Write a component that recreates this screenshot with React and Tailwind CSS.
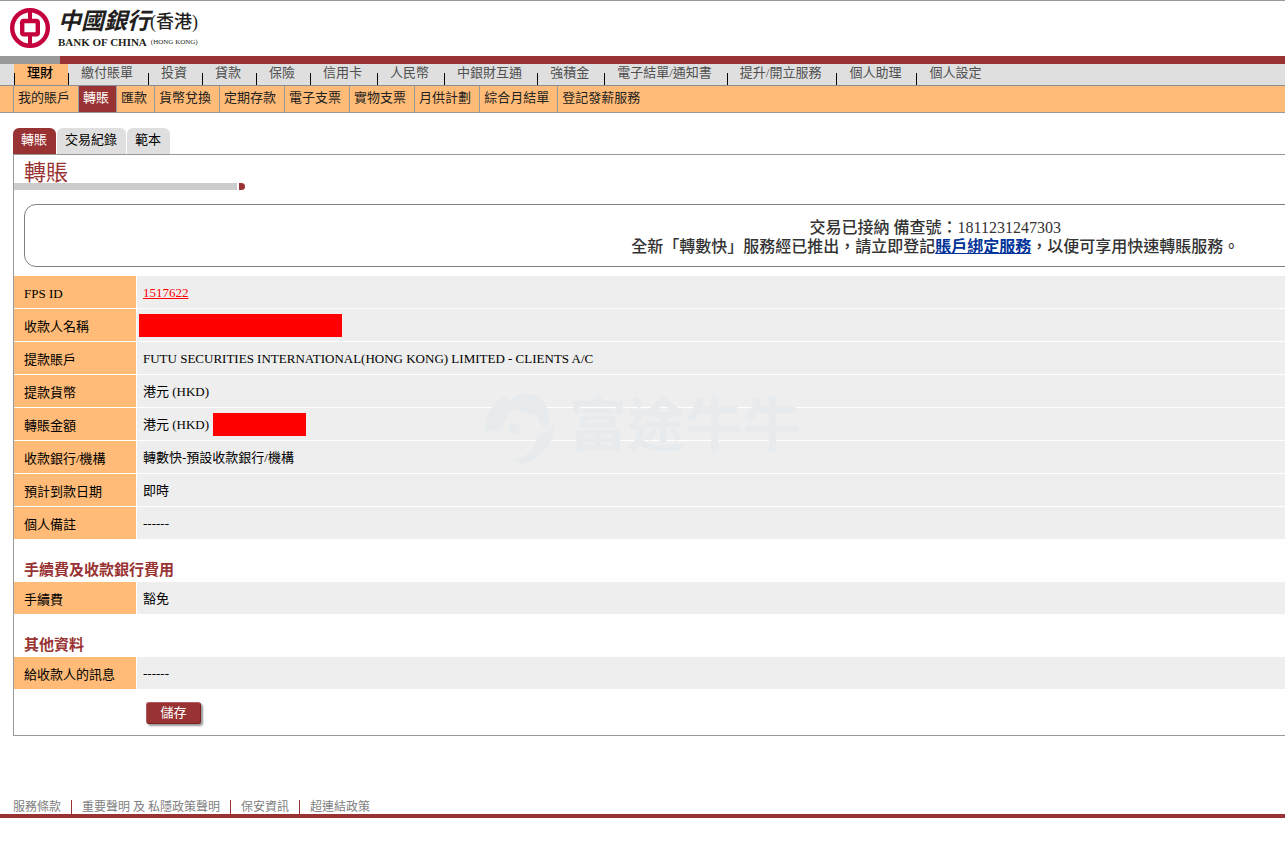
const mainNav = ['理財', '繳付賬單', '投資', '貸款', '保險', '信用卡', '人民幣', '中銀財互通', '強積金', '電子結單/通知書', '提升/開立服務', '個人助理', '個人設定']
const subNav = ['我的賬戶', '轉賬', '匯款', '貨幣兌換', '定期存款', '電子支票', '實物支票', '月供計劃', '綜合月結單', '登記發薪服務']
const tabs = ['轉賬', '交易紀錄', '範本']
const footerLinks = ['服務條款', '重要聲明 及 私隱政策聲明', '保安資訊', '超連結政策']

const details = [
  { label: 'FPS ID', value: <a href="#" className="text-[#ff0000] underline">1517622</a> },
  { label: '收款人名稱', value: <Masked className="-ml-1 w-[203px]" /> },
  { label: '提款賬戶', value: 'FUTU SECURITIES INTERNATIONAL(HONG KONG) LIMITED - CLIENTS A/C' },
  { label: '提款貨幣', value: '港元 (HKD)' },
  { label: '轉賬金額', value: <>港元 (HKD)<Masked className="ml-1 w-[93px]" /></> },
  { label: '收款銀行/機構', value: '轉數快-預設收款銀行/機構' },
  { label: '預計到款日期', value: '即時' },
  { label: '個人備註', value: '------' },
]

function Masked({ className }) {
  return <span className={`h-[23px] bg-[#ff0000] ${className}`}></span>
}

function Logo() {
  return (
    <a href="#" className="flex items-start text-[#231f20]">
      <svg viewBox="0 0 40 40" className="h-10 w-10" aria-hidden="true">
        <g fill="none" stroke="#c4003d" strokeWidth="4">
          <circle cx="20" cy="20" r="17.8" strokeWidth="4.4" />
          <path d="M20 3v9M20 28v9" />
          <rect x="12.2" y="13" width="15.6" height="13.4" rx="1.6" strokeWidth="4.4" />
        </g>
      </svg>
      <span className="ml-2 flex flex-col">
        <span className="flex items-center leading-7 whitespace-nowrap">
          <span className="text-[23px] font-bold italic">中國銀行</span>
          <span className="text-[18px] font-medium">(香港)</span>
        </span>
        <span className="flex items-center gap-1 leading-3 whitespace-nowrap">
          <span className="text-[11px] font-bold">BANK OF CHINA</span>
          <span className="text-[7px]">(HONG KONG)</span>
        </span>
      </span>
    </a>
  )
}

function Watermark() {
  return (
    <div className="pointer-events-none absolute top-[113px] left-[467px] flex items-center gap-3 text-[#e8ebed]" aria-hidden="true">
      <svg viewBox="0 0 76 80" className="h-[76px] w-[76px]" fill="currentColor">
        <path d="M2 44C1 28 12 12 24 8L32 22C24 26 24 40 17 44Z" />
        <path d="M26 16C34 3 52 2 62 12C70 20 72 32 69 40C64 44 60 36 56 28C48 27 36 24 26 16Z" />
        <path d="M75 36C78 54 62 74 42 79C36 80 34 77 35 73C48 71 54 62 57 52C60 44 72 48 75 36Z" />
        <circle cx="33" cy="42" r="6" />
      </svg>
      <span className="text-[58px] leading-[76px] font-bold whitespace-nowrap">富途牛牛</span>
    </div>
  )
}

function DetailTable({ rows, children }) {
  return (
    <div className="relative">
      <table className="w-full border-separate border-spacing-0 bg-[#eeeeee]">
        <tbody>
          {rows.map((row) => (
            <tr key={row.label}>
              <th scope="row" className="h-[33px] w-[123px] border-r border-b border-white bg-[#ffbb77] p-0 pt-1 pl-2.5 text-left font-normal whitespace-nowrap">
                {row.label}
              </th>
              <td className="h-[33px] border-b border-white p-0 pl-1.5">
                <div className="relative z-10 flex h-8 items-center pt-px">{row.value}</div>
              </td>
            </tr>
          ))}
        </tbody>
      </table>
      {children}
    </div>
  )
}

function SectionTitle({ children }) {
  return <h2 className="flex h-[42px] items-end pl-2.5 text-[15px] leading-6 font-bold text-[#993333]">{children}</h2>
}

const App = () => {
  return (
    <div lang="zh-Hant" className="min-h-screen overflow-x-hidden bg-white font-['Liberation_Serif','Noto_Sans_CJK_TC',sans-serif] text-[13px] leading-4 text-black">
      <header>
        <div className="h-14 border-t border-[#999999] pt-[7px] pl-2.5">
          <Logo />
        </div>
        <div className="flex h-2 bg-[#993333]">
          <div className="w-[60px] bg-[#999999]"></div>
        </div>
        <nav className="border-b border-[#8c8c94] bg-[#dfdfdf] pl-3.5">
          <ul className="flex h-[21px] whitespace-nowrap">
            {mainNav.map((item, i) => (
              <li key={item} className={i === 0 ? 'flex bg-[#ffbb77] text-black' : 'flex text-[#505050]'}>
                <span className="h-3 w-px self-end bg-black"></span>
                <a href="#" className={i === 0 ? 'pr-[15px] pl-3 leading-[18px] font-medium' : 'pr-[15px] pl-3 leading-[18px]'}>{item}</a>
              </li>
            ))}
          </ul>
        </nav>
        <nav className="border-b border-[#999999] bg-[#ffbb77] pl-[13px]">
          <ul className="flex h-[26px] whitespace-nowrap">
            {subNav.map((item) => (
              <li key={item} className={item === '轉賬' ? 'flex border-l border-[#999999] bg-[#993333] text-white' : 'flex border-l border-[#999999] text-[#222222]'}>
                <a href="#" className={item.length === 2 ? 'pr-[7px] pl-1 leading-6' : 'pr-2 pl-1 leading-6'}>{item}</a>
              </li>
            ))}
          </ul>
        </nav>
      </header>

      <main className="pt-[15px] pl-[13px]">
        <nav className="flex gap-px">
          {tabs.map((tab, i) => (
            <a
              key={tab}
              href="#"
              className={i === 0
                ? 'h-[26px] rounded-t-md bg-[#993333] pr-[9px] pl-2 leading-6 text-white'
                : 'h-[26px] rounded-t-md bg-[#dfdfdf] pr-[9px] pl-2 leading-6'}
            >
              {tab}
            </a>
          ))}
        </nav>

        {/* the panel runs past the right edge of the window */}
        <section className="w-[145%] border border-[#999999] pb-[11px]">
          <h1 className="h-7 pt-2 pl-2.5 text-[22px] leading-5 text-[#993333]">轉賬</h1>
          <div className="flex h-[7px] gap-0.5">
            <div className="w-[223px] bg-[#cccccc]"></div>
            <div className="w-1.5 rounded-r-full bg-[#993333]"></div>
          </div>

          <div className="mx-2.5 mt-3.5 rounded-xl border border-[#808080] pt-[13px] pb-2.5 text-center text-[16px] leading-[19px] font-medium text-[#333333]">
            <p>交易已接納 備查號：1811231247303</p>
            <p>
              全新「轉數快」服務經已推出，請立即登記<a href="#" className="font-bold text-[#003399] underline">賬戶綁定服務</a>，以便可享用快速轉賬服務。
            </p>
          </div>

          <div className="mt-[9px]">
            <DetailTable rows={details}>
              <Watermark />
            </DetailTable>
          </div>

          <SectionTitle>手續費及收款銀行費用</SectionTitle>
          <DetailTable rows={[{ label: '手續費', value: '豁免' }]} />

          <SectionTitle>其他資料</SectionTitle>
          <DetailTable rows={[{ label: '給收款人的訊息', value: '------' }]} />

          <button type="button" className="mt-3 ml-[132px] block h-[22px] w-[55px] rounded-[3px] border border-t-[#b45a5a] border-r-[#7a2222] border-b-[#7a2222] border-l-[#b45a5a] bg-[#993333] leading-5 text-white shadow-[2px_2px_2px_#999999]">
            儲存
          </button>
        </section>
      </main>

      <footer className="mt-16 border-b-4 border-[#993333] pl-[13px]">
        <ul className="flex h-3.5 text-[12px] leading-3.5 whitespace-nowrap text-[#808080]">
          {footerLinks.map((link, i) => (
            <li key={link} className={i === 0 ? 'pr-2.5' : 'border-l border-[#993333] px-2.5'}>
              <a href="#">{link}</a>
            </li>
          ))}
        </ul>
      </footer>
    </div>
  )
}

export default App
